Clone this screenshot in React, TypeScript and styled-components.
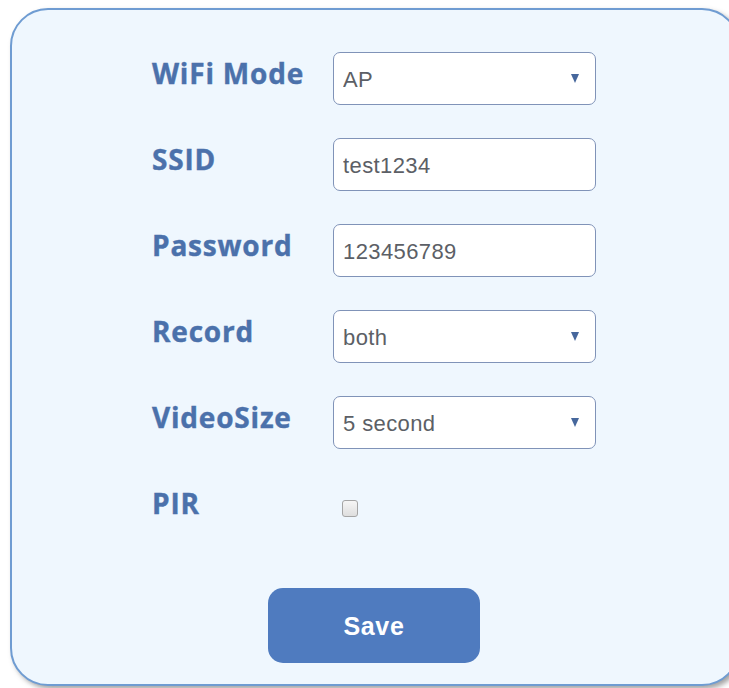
import React, { useState } from 'react';
import styled, { createGlobalStyle } from 'styled-components';

const GlobalStyle = createGlobalStyle`
  html, body {
    margin: 0;
    padding: 0;
    background: #ffffff;
  }
  body {
    font-family: "Open Sans", "Liberation Sans", sans-serif;
  }
`;

const Page = styled.div`
  width: 729px;
  height: 688px;
  overflow: hidden;
  padding: 8px 0 0 10px;
  box-sizing: border-box;
`;

const Card = styled.form`
  width: 730px;
  height: 678px;
  box-sizing: border-box;
  background: #eff7fe;
  border: 2px solid #6f9cd2;
  border-radius: 38px;
  box-shadow: 3px 3px 5px rgba(90, 90, 90, 0.55);
  padding: 42px 0 0 140px;
  display: flex;
  flex-direction: column;
`;

const Fields = styled.div`
  display: grid;
  grid-template-columns: 181px 263px;
  grid-auto-rows: 53px;
  row-gap: 33px;
  align-items: center;
`;

const Label = styled.label`
  font-family: "Open Sans", sans-serif;
  font-weight: 700;
  font-size: 28px;
  letter-spacing: 0.8px;
  color: #4b71ab;
  margin-top: -12px;
  white-space: nowrap;
  -webkit-text-stroke: 0.4px #4b71ab;
`;

const fieldBox = `
  width: 263px;
  height: 53px;
  box-sizing: border-box;
  border: 1.5px solid #8093b8;
  border-radius: 7px;
  background: #ffffff;
  padding: 2px 0 0 9px;
  font-family: "Liberation Sans", Arial, sans-serif;
  font-size: 22px;
  letter-spacing: 0.4px;
  color: #5c5f66;
  outline: none;
`;

const TextInput = styled.input`
  ${fieldBox}
`;

const SelectWrap = styled.div`
  position: relative;
  width: 263px;
  height: 53px;
`;

const Select = styled.select`
  ${fieldBox}
  appearance: none;
  -webkit-appearance: none;
`;

const Arrow = styled.span`
  position: absolute;
  right: 17px;
  top: 22px;
  width: 0;
  height: 0;
  border-left: 4.5px solid transparent;
  border-right: 4.5px solid transparent;
  border-top: 9px solid #46679c;
  pointer-events: none;
`;

const CheckCell = styled.div`
  display: flex;
  align-items: center;
  padding-left: 9px;
`;

const Check = styled.input`
  appearance: none;
  -webkit-appearance: none;
  margin: 0;
  width: 16px;
  height: 17px;
  border: 1.5px solid #a5a5a5;
  border-radius: 3px;
  background: linear-gradient(#f6f6f6, #dedede);
  box-sizing: border-box;
`;

const Actions = styled.div`
  display: flex;
  padding: 53px 0 0 116px;
`;

const SaveButton = styled.button`
  width: 212px;
  height: 75px;
  border: none;
  border-radius: 15px;
  background: #4f7bbf;
  color: #ffffff;
  font-family: "Liberation Sans", Arial, sans-serif;
  font-weight: 700;
  font-size: 25px;
  letter-spacing: 0.6px;
  padding-top: 2px;
  cursor: pointer;
`;

const SelectField: React.FC<{ id: string; value: string; options: string[] }> = ({ id, value, options }) => {
  const [current, setCurrent] = useState(value);
  return (
    <SelectWrap>
      <Select id={id} value={current} onChange={e => setCurrent(e.target.value)}>
        {options.map(o => (
          <option key={o} value={o}>{o}</option>
        ))}
      </Select>
      <Arrow />
    </SelectWrap>
  );
};

const App: React.FC = () => {
  const [ssid, setSsid] = useState('test1234');
  const [password, setPassword] = useState('123456789');
  const [pir, setPir] = useState(false);

  return (
    <Page>
      <GlobalStyle />
      <Card onSubmit={e => e.preventDefault()}>
        <Fields>
          <Label htmlFor="mode">WiFi Mode</Label>
          <SelectField id="mode" value="AP" options={['AP', 'STA']} />

          <Label htmlFor="ssid">SSID</Label>
          <TextInput id="ssid" value={ssid} onChange={e => setSsid(e.target.value)} />

          <Label htmlFor="pwd">Password</Label>
          <TextInput id="pwd" value={password} onChange={e => setPassword(e.target.value)} />

          <Label htmlFor="record">Record</Label>
          <SelectField id="record" value="both" options={['both', 'video', 'photo']} />

          <Label htmlFor="vsize">VideoSize</Label>
          <SelectField id="vsize" value="5 second" options={['5 second', '10 second', '30 second']} />

          <Label htmlFor="pir">PIR</Label>
          <CheckCell>
            <Check id="pir" type="checkbox" checked={pir} onChange={() => setPir(!pir)} />
          </CheckCell>
        </Fields>
        <Actions>
          <SaveButton type="submit">Save</SaveButton>
        </Actions>
      </Card>
    </Page>
  );
};

export default App;
